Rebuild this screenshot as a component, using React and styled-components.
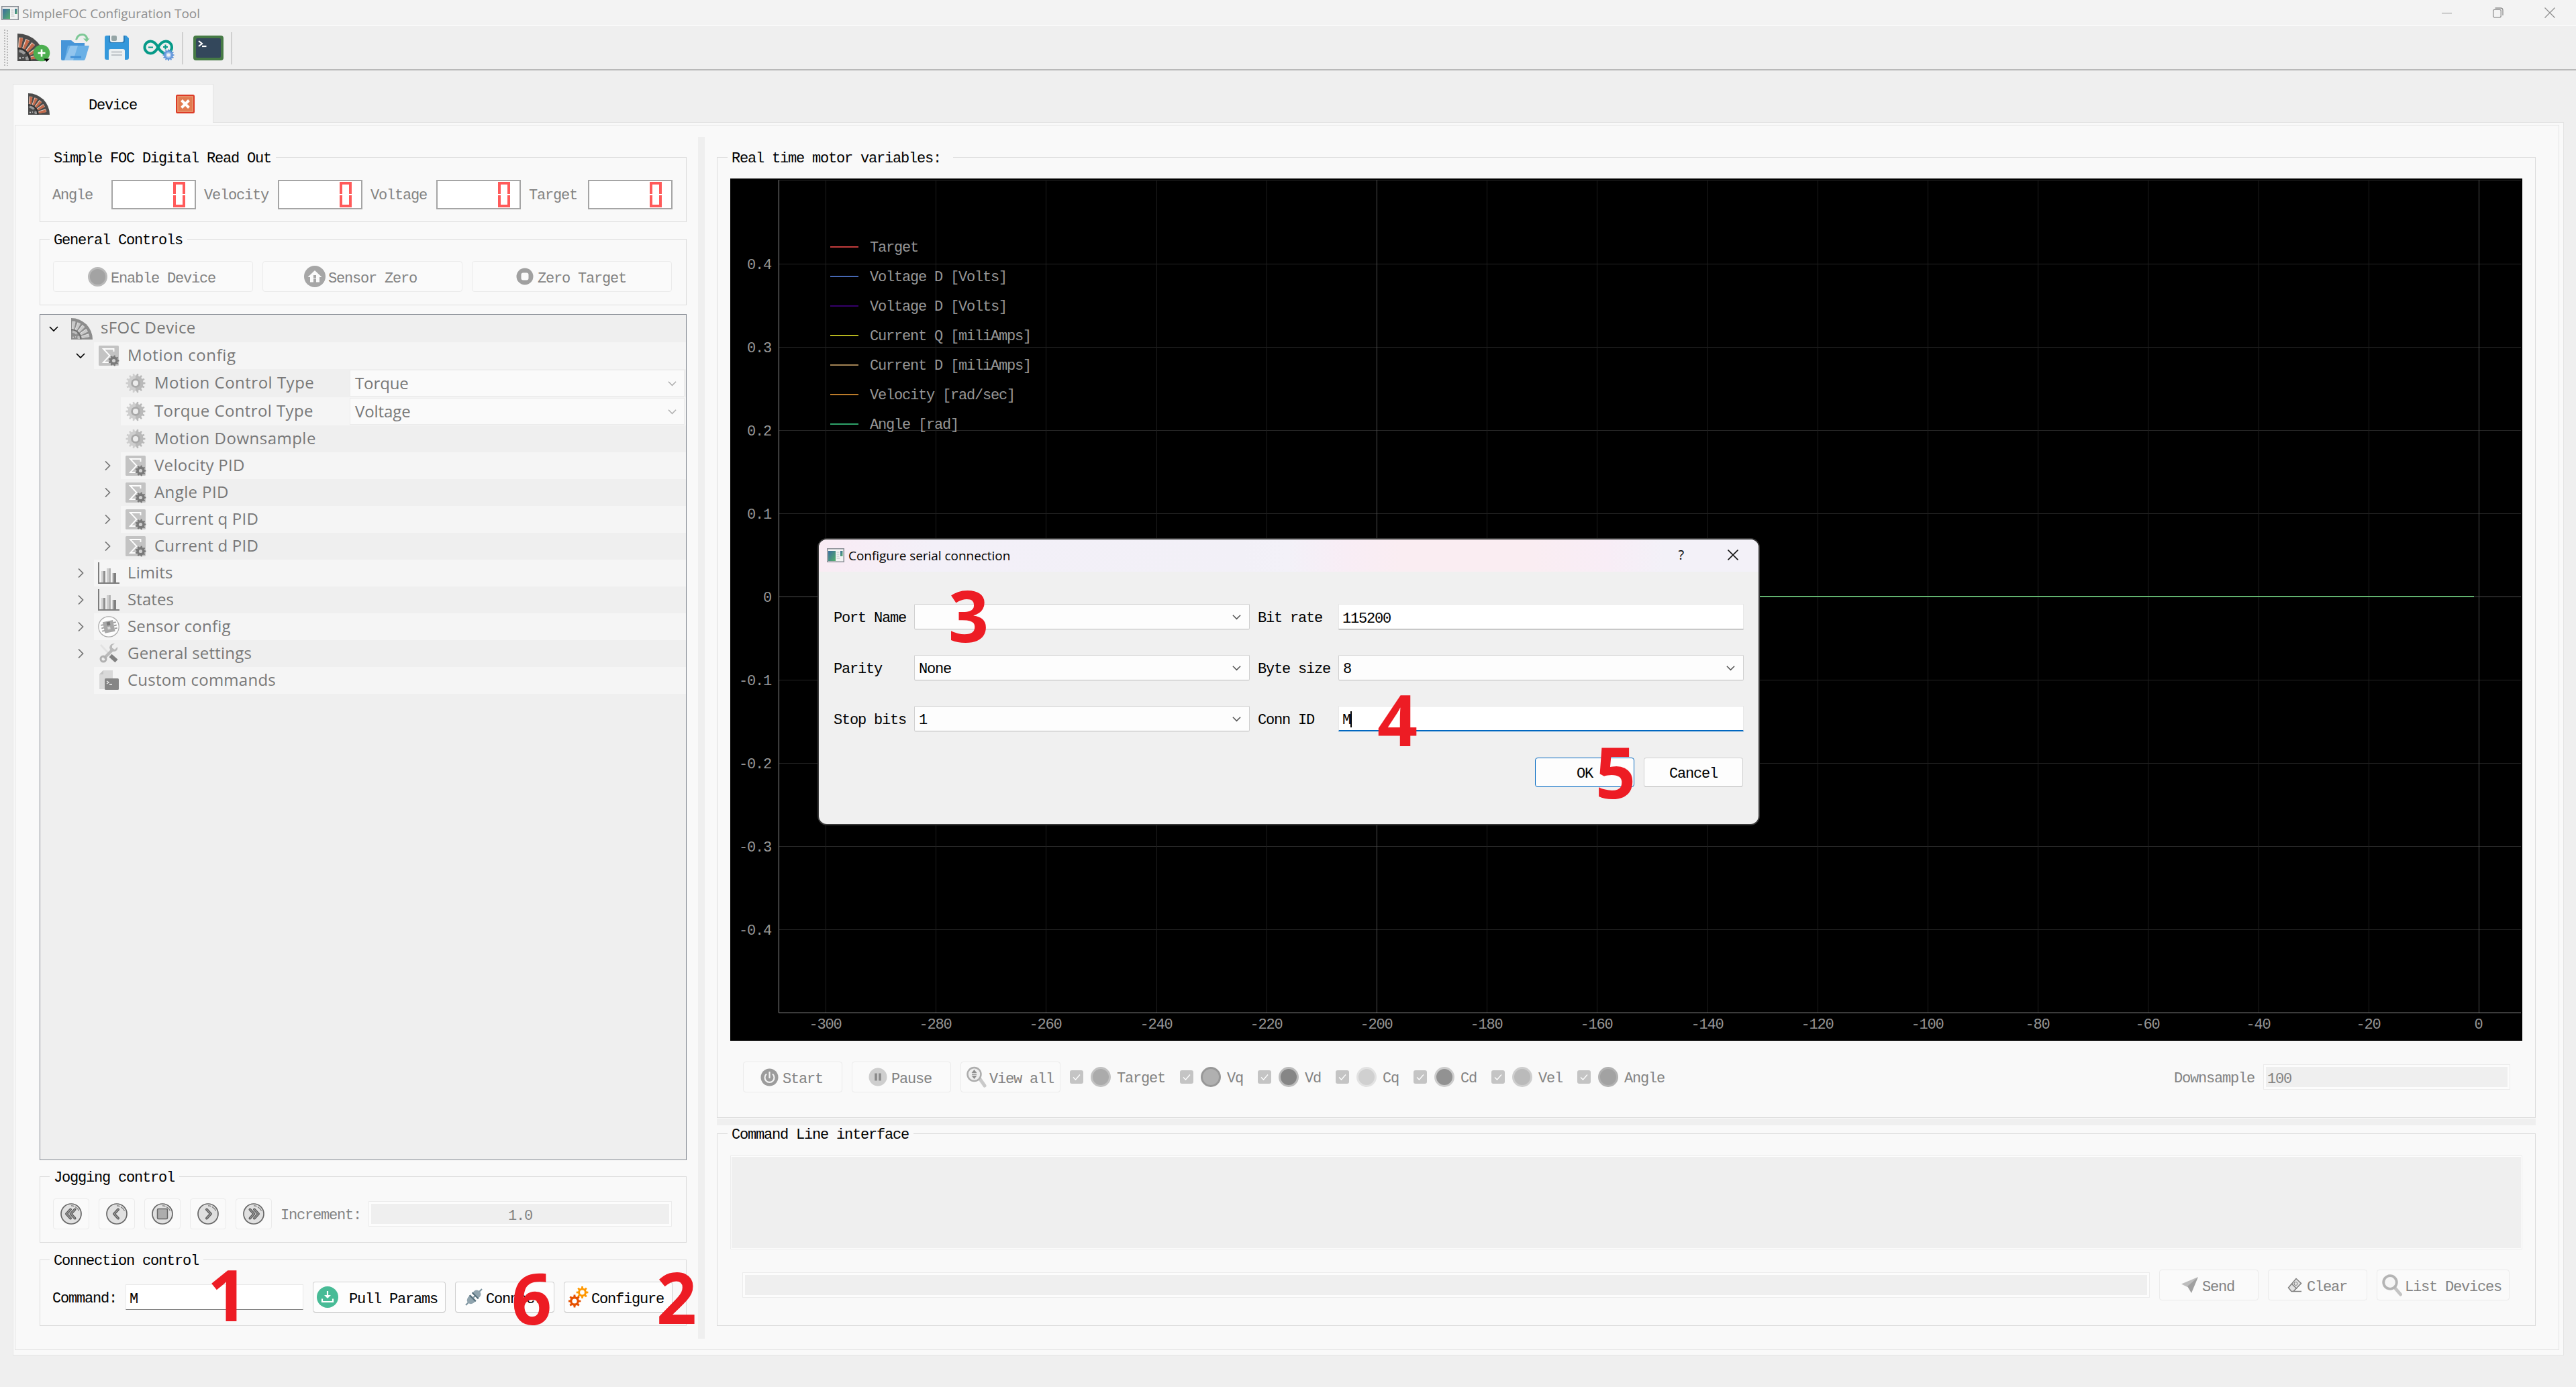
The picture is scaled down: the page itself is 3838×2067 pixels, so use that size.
import React from "react";
import styled, { createGlobalStyle, css } from "styled-components";

const mono = `"Liberation Mono", "Noto Sans CJK SC", monospace`;
const sans = `"Open Sans", "Noto Sans", sans-serif`;

const GlobalStyle = createGlobalStyle`
  *, *::before, *::after { box-sizing: border-box; }
  html, body { margin: 0; padding: 0; background: #efefef; }
  svg { display: block; flex: none; }
`;

/* ---------- window frame ---------- */

const Window = styled.div`
  position: relative;
  display: flex;
  flex-direction: column;
  width: 3838px;
  height: 2067px;
  overflow: hidden;
  background: #efefef;
  font-family: ${mono};
  font-size: 22px;
  letter-spacing: -1.2px;
  line-height: 26px;
  color: #000;
`;

const TitleBar = styled.header`
  display: flex;
  align-items: center;
  height: 39px;
  padding: 0 31px 0 2px;
  background: #f3f3f3;
  border-bottom: 1px solid #fff;
`;

const WindowTitle = styled.h1`
  flex: 1;
  margin: 2px 0 0 5px;
  font: 400 19px/26px ${sans};
  letter-spacing: -0.02px;
  color: #8f8f8f;
`;

const WindowButtons = styled.div`
  display: flex;
  align-items: center;
  gap: 61px;
`;

const ToolBar = styled.nav`
  display: flex;
  align-items: center;
  height: 66px;
  padding-left: 5px;
  border-bottom: 2px solid #b9b9b9;
`;

const ToolButton = styled.span`
  display: flex;
  width: 48px;
  height: 42px;
  margin-left: ${(p) => p.$gap}px;
`;

const Separator = styled.i`
  width: 2px;
  height: 48px;
  margin: 2px 0 0 ${(p) => p.$gap}px;
  background: #d0d0d0;
`;

const Tab = styled.div`
  position: relative;
  z-index: 1;
  display: flex;
  align-items: center;
  width: 299px;
  height: 58px;
  margin: 20px 0 -1px 19px;
  padding: 0 27px 0 22px;
  background: #f9f9f9;
  border: 1px solid #e3e3e3;
  border-bottom: 0;
`;

const TabLabel = styled.span`
  flex: 1;
  padding: 6px 0 0 58px;
`;

const Pane = styled.main`
  display: flex;
  width: 3801px;
  height: 1838px;
  margin-left: 19px;
  padding: 3px 7px 7px 2px;
  background: #f9f9f9;
  border: 1px solid #e3e3e3;
`;

const Page = styled.div`
  display: flex;
  flex: 1;
  padding: 17px 34px 16px 36px;
  border: 1px solid #e3e3e3;
`;

const Column = styled.section`
  display: flex;
  flex-direction: column;
  padding-top: 30px;
  width: ${(p) => p.$width}px;
`;

const VerticalSplitter = styled.i`
  width: 10px;
  margin: 0 18px 0 17px;
  background: #efefef;
`;

const HorizontalSplitter = styled.i`
  height: 10px;
  margin-top: 1px;
  background: #efefef;
`;

/* ---------- shared controls ---------- */

const Group = styled.section`
  display: flex;
  flex-direction: column;
  height: ${(p) => p.$height}px;
  margin-top: ${(p) => p.$gap || 0}px;
  border: 1px solid #dcdcdc;
`;

const GroupTitle = styled.h2`
  align-self: flex-start;
  height: 26px;
  margin: -11px 0 0 ${(p) => p.$left ?? 14}px;
  padding: 0 ${(p) => p.$after ?? 7}px 0 6px;
  font: inherit;
  background: #f9f9f9;
`;

const Row = styled.div`
  display: flex;
  align-items: center;
  margin: ${(p) => p.$margin || "0"};
`;

const Caption = styled.span`
  width: ${(p) => p.$width}px;
  padding-top: ${(p) => p.$drop ?? 6}px;
  white-space: pre;
  color: ${(p) => (p.$active ? "#000" : "#838383")};
`;

const Button = styled.button`
  display: flex;
  align-items: center;
  justify-content: ${(p) => (p.$pad === undefined ? "center" : "flex-start")};
  width: ${(p) => p.$width}px;
  height: ${(p) => p.$height || 46}px;
  margin: 0 0 0 ${(p) => p.$gap || 0}px;
  padding: 0 0 0 ${(p) => p.$pad || 0}px;
  font: inherit;
  letter-spacing: inherit;
  white-space: pre;
  color: #838383;
  background: #fafafa;
  border: 1px solid #ebebeb;
  border-radius: 4px;
  ${(p) =>
    p.$active &&
    css`
      color: #000;
      background: #fdfdfd;
      border-color: #d0d0d0;
      border-bottom-color: #b8b8b8;
    `}
  ${(p) =>
    p.$primary &&
    css`
      border-color: #0067c0;
    `}
`;

const ButtonText = styled.span`
  padding: ${(p) => p.$drop ?? 7}px 0 0 ${(p) => p.$left || 0}px;
`;

const Field = styled.div`
  display: flex;
  align-items: center;
  width: ${(p) => p.$width}px;
  height: 38px;
  margin-left: ${(p) => p.$gap || 0}px;
  padding: 7px 0 0 ${(p) => p.$pad ?? 5}px;
  background: #fff;
  border: 1px solid #e8e8e8;
  border-bottom-color: #868686;
  ${(p) =>
    p.$focused &&
    css`
      border-bottom: 2px solid #0067c0;
    `}
`;

const DisabledField = styled.div`
  display: flex;
  width: ${(p) => p.$width}px;
  height: ${(p) => p.$height || 38}px;
  margin: ${(p) => p.$margin || "0"};
  padding: ${(p) => p.$inset || "3px"};
  background: #fcfcfc;
  border: 1px solid #ececec;
`;

const DisabledFill = styled.div`
  flex: 1;
  padding: 6px 0 0 ${(p) => p.$pad || 0}px;
  line-height: 26px;
  text-align: ${(p) => p.$align || "left"};
  color: #838383;
  background: #efefef;
`;

const Select = styled.div`
  display: flex;
  align-items: center;
  justify-content: space-between;
  width: ${(p) => p.$width}px;
  height: 38px;
  padding: 0 12px 0 6px;
  background: #fdfdfd;
  border: 1px solid #d0d0d0;
  border-bottom-color: #b8b8b8;
  border-radius: 2px;
`;

const Caret = styled.i`
  width: 2px;
  height: 24px;
  margin-top: -4px;
  background: #000;
`;

/* ---------- read out ---------- */

const Lcd = styled.div`
  display: flex;
  justify-content: flex-end;
  width: 126px;
  height: 44px;
  margin-right: 12px;
  padding: 1px 14px 0 0;
  background: #fff;
  border: 2px solid #a5a5a5;
`;

/* ---------- tree ---------- */

const Tree = styled.div`
  height: 1261px;
  margin-top: 13px;
  background: #efefef;
  border: 1px solid #828790;
`;

const TreeRow = styled.div`
  display: flex;
  height: ${(p) => p.$height}px;
  padding-left: ${(p) => p.$level * 40}px;
`;

const Branch = styled.span`
  display: flex;
  align-items: center;
  justify-content: center;
  width: 40px;
`;

const TreeCell = styled.span`
  display: flex;
  flex: 1;
  align-items: center;
  padding-left: 6px;
  background: ${(p) => (p.$alt ? "#f5f5f5" : "#efefef")};
`;

const TreeText = styled.span`
  flex: 1;
  padding: 0 0 3px 12px;
  font: 400 24px/32px ${sans};
  letter-spacing: ${(p) => p.$tracking}px;
  color: #787878;
`;

const TreeSelect = styled.span`
  display: flex;
  align-items: center;
  justify-content: space-between;
  width: 499px;
  height: 40px;
  margin-right: 2px;
  padding: 0 11px 0 7px;
  font: 400 24px/32px ${sans};
  letter-spacing: -0.1px;
  color: #787878;
  background: #fafafa;
  border: 1px solid #ebebeb;
`;

/* ---------- plot tools ---------- */

const SeriesToggle = styled.label`
  display: flex;
  align-items: center;
  margin-right: 22px;
`;

const Check = styled.span`
  display: flex;
  width: 20px;
  height: 20px;
  margin-right: 11px;
  background: #c4c4c4;
  border-radius: 3px;
`;

const SeriesText = styled.span`
  padding: 6px 0 0 9px;
  color: #838383;
`;

/* ---------- dialog ---------- */

const Dialog = styled.div`
  position: absolute;
  left: 1220px;
  top: 804px;
  width: 1400px;
  height: 424px;
  background: #f0f0f0;
  border-radius: 12px;
  box-shadow: 0 0 0 2px #383838;
  overflow: hidden;
`;

const DialogBar = styled.div`
  display: flex;
  align-items: center;
  height: 48px;
  padding: 0 30px 2px 12px;
  background: linear-gradient(90deg, #f9ecf3 0%, #f8ecf5 2%, #f3f0f8 12%, #f2f0f7 45%, #f3f1f8 50%, #f8edf5 56%, #faedf2 62%, #faedf2 76%, #f8edf6 84%, #f3f1f8 90%, #f3f1f8 100%);
`;

const DialogTitle = styled.h2`
  flex: 1;
  margin: 2px 0 0 6px;
  font: 400 19px/26px ${sans};
  letter-spacing: -0.04px;
`;

const HelpMark = styled.span`
  margin: 0 66px 0 0;
  font: 400 20px/26px ${sans};
`;

const Form = styled.div`
  display: grid;
  grid-template-columns: 120px 512px 120px 604px;
  grid-auto-rows: 38px;
  row-gap: 38px;
  padding: 48px 0 0 22px;
`;

const DialogActions = styled.div`
  display: flex;
  justify-content: flex-end;
  gap: 14px;
  padding: 39px 23px 0 0;
`;

const StepNumber = styled.strong`
  position: absolute;
  left: ${(p) => p.$x}px;
  top: ${(p) => p.$y}px;
  width: 60px;
  font: 700 105px/76px ${sans};
  letter-spacing: 0;
  text-align: center;
  color: #ed1c24;
`;

/* ---------- icons ---------- */

const AppIcon = () => (
  <svg width="26" height="21" viewBox="0 0 26 21">
    <rect x=".75" y=".75" width="24.5" height="19.5" fill="#f4f4f4" stroke="#8a8f96" strokeWidth="1.5" />
    <defs>
      <linearGradient id="app" x1="0" y1="0" x2="1" y2="1">
        <stop offset="0" stopColor="#3b6b9e" />
        <stop offset="1" stopColor="#55b06c" />
      </linearGradient>
    </defs>
    <rect x="2" y="4" width="11" height="15" fill="url(#app)" />
    <path d="M14.5 6h4M14.5 9h4M14.5 12h4M14.5 15h5" stroke="#b9bcc0" />
    <rect x="20" y="4" width="3.5" height="8" fill="url(#app)" />
  </svg>
);

const MotorShape = ({ gray }) => {
  const coil = gray ? "#c8c8c8" : "#c4694a";
  const light = gray ? "#e0e0e0" : "#e9d2c5";
  return (
    <g>
      <path d="M0 0A32 32 0 0 1 32 32H0Z" fill={gray ? "#8c8c8c" : "#4b4b4b"} />
      <g transform="translate(0 32)">
        {[8, 25, 42, 59, 76].map((a) => (
          <g key={a} transform={`rotate(${a})`}>
            <path d="M-2.2 -27.5L2.6 -27.5L1.8 -16L-1.4 -16Z" fill={light} />
            <path d="M-1.2 -27L2.8 -27L2 -16L-.4 -16Z" fill={coil} />
          </g>
        ))}
        <path d="M0 -14.5A14.5 14.5 0 0 1 14.5 0" fill="none" stroke={gray ? "#6f6f6f" : "#2f2f2f"} strokeWidth="2" />
        <path d="M2 -12A12 12 0 0 1 8.5 -8.5M10.5 -5A12 12 0 0 1 11.5 -1" stroke={gray ? "#bdbdbd" : "#9a9a9a"} strokeWidth="3.4" fill="none" />
        <circle cx="3" cy="-3.5" r="1" fill="#ddd" />
        <circle cx="6.5" cy="-4" r=".8" fill="#ddd" />
      </g>
    </g>
  );
};

const MotorIcon = ({ gray, size = 32 }) => (
  <svg width={size} height={size} viewBox="0 0 32 32"><MotorShape gray={gray} /></svg>
);

const Grip = () => (
  <svg width="8" height="54">
    {Array.from({ length: 14 }, (_, i) => (
      <g key={i} fill="#b8b8b8">
        <rect x="1" y={i * 4} width="2" height="2" />
        <rect x="5" y={i * 4 + 1} width="2" height="2" />
      </g>
    ))}
  </svg>
);

const AddMotorIcon = () => (
  <svg width="50" height="42" viewBox="0 0 50 42">
    <g transform="scale(1.28)"><MotorShape /></g>
    <circle cx="36" cy="29" r="12.3" fill="#4caf50" />
    <path d="M36 23.5v11M30.5 29h11" stroke="#fff" strokeWidth="2.6" />
    <path d="M39 37.5h9l-4.5 4.5z" fill="#000" />
  </svg>
);

const OpenIcon = () => (
  <svg width="44" height="42" viewBox="0 0 44 42">
    <path d="M0 10h15l5 4h15v8L28 40H2q-2 0-2-2z" fill="#4795d8" />
    <path d="M10 18h32l-6 20q-.5 2-2.5 2H5z" fill="#6ab0e6" />
    <path d="M14 18h11l-7 22H5z" fill="#92c5ee" />
    <path d="M14 35h16" stroke="#4290d6" strokeWidth="3" />
    <path d="M22.5 9.500q2-8 9-8 6 0 7.500 7" fill="none" stroke="#7ec896" strokeWidth="3" />
    <path d="M33 7.500h9.500l-4.500 5z" fill="#7ec896" />
  </svg>
);

const SaveIcon = () => (
  <svg width="36" height="36" viewBox="0 0 36 36">
    <path d="M3 0h29l4 4v29q0 3-3 3H3q-3 0-3-3V3q0-3 3-3z" fill="#3498db" />
    <path d="M6 0h24v8q0 3-3 3H9q-3 0-3-3z" fill="#2a7cb8" />
    <path d="M8 0h20v7q0 3-3 3H11q-3 0-3-3z" fill="#ecf0f1" />
    <rect x="10" y="0" width="8" height="8" rx="2" fill="#95a5a6" />
    <path d="M6 36V23q0-3 3-3h18q3 0 3 3v13z" fill="#ecf0f1" />
    <path d="M10 24.5h16M10 29h16" stroke="#bdc3c7" strokeWidth="2" />
  </svg>
);

const ArduinoIcon = () => (
  <svg width="48" height="34" viewBox="0 0 48 34">
    <path d="M22.5 11.5C19 5 15.5 2.5 11.5 2.5a9 9 0 0 0 0 18c4 0 7.5-2.500 11-9S30 2.5 34 2.5a9 9 0 0 1 0 18c-4 0-8-2.500-11.5-9z" fill="none" stroke="#069a88" strokeWidth="4" />
    <path d="M8 11.5h7M30 11h7M33.5 7.5v7" stroke="#069a88" strokeWidth="2.2" />
    <path d={gearPath(38, 23, 8.6, 12, 1.8)} fill="#5d92d8" />
    <circle cx="38" cy="23" r="5" fill="#a9c6ef" stroke="#6d9ddd" strokeWidth="2" />
    <circle cx="38" cy="23" r="2.4" fill="#efefef" />
  </svg>
);

const TerminalIcon = () => (
  <svg width="45" height="37" viewBox="0 0 45 37">
    <rect width="45" height="37" rx="4" fill="#467a45" />
    <rect x="4" y="4" width="37" height="29" rx="2" fill="#33475b" />
    <path d="M8 8l5 4-5 4" fill="none" stroke="#fff" strokeWidth="2.2" />
    <path d="M13 16h6.5" stroke="#fff" strokeWidth="2.2" />
  </svg>
);

const CloseTabIcon = () => (
  <svg width="28" height="28" viewBox="0 0 28 28">
    <rect x="1" y="1" width="26" height="26" rx="1.5" fill="#e27b50" stroke="#dc3a26" strokeWidth="2" />
    <rect x="3" y="3" width="22" height="22" fill="none" stroke="#e9956f" strokeWidth="1.5" />
    <path d="M8.5 8.5l11 11M19.5 8.5l-11 11" stroke="#fff" strokeWidth="4" />
  </svg>
);

const Chevron = ({ down, color = "#000", size = 14 }) => (
  <svg width={size} height={size} viewBox="0 0 14 14">
    <path d={down ? "M1 4l6 6 6-6" : "M4 0.5l6.5 6.5-6.5 6.5"} fill="none" stroke={color} strokeWidth="1.7" />
  </svg>
);

function gearPath(cx, cy, r, teeth, depth) {
  const pts = [];
  for (let i = 0; i < teeth; i++) {
    [[-0.3, r - depth], [-0.18, r], [0.18, r], [0.3, r - depth]].forEach(([o, rad]) => {
      const a = ((i + o) / teeth) * Math.PI * 2;
      pts.push(`${(cx + Math.cos(a) * rad).toFixed(2)} ${(cy + Math.sin(a) * rad).toFixed(2)}`);
    });
  }
  return `M${pts.join("L")}Z`;
}

const GearIcon = () => (
  <svg width="32" height="32" viewBox="0 0 32 32">
    <defs>
      <linearGradient id="gear">
        <stop offset=".5" stopColor="#cecece" />
        <stop offset=".5" stopColor="#b9b9b9" />
      </linearGradient>
    </defs>
    <path d={gearPath(16, 16, 14.5, 14, 3)} fill="url(#gear)" />
    <circle cx="16" cy="16" r="6.800" fill="#a8a8a8" />
    <circle cx="16" cy="16" r="4" fill="#ececec" />
  </svg>
);

const SigmaIcon = () => (
  <svg width="32" height="32" viewBox="0 0 32 32">
    <rect x="1" y="1" width="30" height="30" rx="1.500" fill="#c3c3c3" />
    <path d="M23.500 10V6H8l9.500 10L8 26h11" fill="none" stroke="#fdfdfd" strokeWidth="1.900" />
    <path d={gearPath(23.500, 23.500, 8, 9, 1.800)} fill="#7a7a7a" />
    <circle cx="23.500" cy="23.500" r="2.600" fill="#d0d0d0" />
  </svg>
);

const ChartIcon = () => (
  <svg width="32" height="32" viewBox="0 0 32 32">
    <path d="M1 0v31h31" fill="none" stroke="#7d7d7d" strokeWidth="2" />
    <path d="M5 13h3v17h-3zM13 9h3v21h-3zM21 16h3v14h-3z" fill="#cfcfcf" />
    <path d="M8 13h3v17h-3z" fill="#8f8f8f" />
    <path d="M16 9h3v21h-3z" fill="#b4b4b4" />
    <path d="M23 16h4v14h-4z" fill="#808080" />
  </svg>
);

const SensorIcon = () => (
  <svg width="32" height="32" viewBox="0 0 32 32">
    <circle cx="16" cy="16" r="15.2" fill="#fdfdfd" stroke="#a9a9a9" strokeWidth="1.200" />
    <g transform="rotate(-12 16 16)">
      <path d="M5 11.500h4M5 16h4M5 20.500h4M24 11.500h4M24 16h4M24 20.500h4" stroke="#9a9a9a" strokeWidth="1.800" />
      <rect x="8.500" y="7.500" width="15.500" height="17" fill="#a8a8a8" />
      <rect x="14" y="9" width="5" height="5" fill="#7a7a7a" />
      <rect x="14" y="16" width="4" height="4" fill="#d8d8d8" />
    </g>
  </svg>
);

const ToolsIcon = () => (
  <svg width="32" height="32" viewBox="0 0 32 32">
    <path d="M4 3l14 15" stroke="#e2e2e2" strokeWidth="2.600" />
    <path d="M18.500 19l9 8" stroke="#808080" strokeWidth="6" />
    <path d="M9 23L23 9" stroke="#bababa" strokeWidth="4.500" />
    <circle cx="8" cy="24" r="4" fill="none" stroke="#b0b0b0" strokeWidth="3" />
    <path d="M29 6l-4 4-4-2 0-4 4-3q-7-.5-8 6 1 6 7 6 6-1 5-7z" fill="#bababa" />
  </svg>
);

const CommandsIcon = () => (
  <svg width="32" height="32" viewBox="0 0 32 32">
    <path d="M8 1h14v28H2V7z" fill="#d9d9d9" />
    <path d="M8 1v6H2z" fill="#c4c4c4" />
    <rect x="10" y="13" width="21" height="17" rx="1.5" fill="#858585" />
    <path d="M13 17l3 2-3 2M17 22h4" fill="none" stroke="#f2f2f2" strokeWidth="1.3" />
  </svg>
);

const Disc = ({ size = 30, fill = "#a3a3a3", ring = "#b9b9b9", width = 3 }) => (
  <svg width={size} height={size} viewBox="0 0 30 30">
    <circle cx="15" cy="15" r={15 - width / 2} fill={fill} stroke={ring} strokeWidth={width} />
  </svg>
);

const HomeIcon = () => (
  <svg width="32" height="32" viewBox="0 0 32 32">
    <circle cx="16" cy="16" r="16" fill="#a6a6a6" />
    <path d="M16 7L5.5 17h3.5v7.500h5V19h4v5.500h5V17h3.500z" fill="#fafafa" />
    <rect x="14" y="14" width="4" height="4" fill="#a6a6a6" />
  </svg>
);

const RingIcon = () => (
  <svg width="26" height="26" viewBox="0 0 26 26">
    <circle cx="13" cy="13" r="12.5" fill="#a0a0a0" />
    <rect x="7.5" y="7.5" width="11" height="11" rx="3" fill="#fafafa" />
  </svg>
);

const jogArrows = {
  first: ["M15 9.5L9 16l6 6.5", "M21.5 9.5L15.5 16l6 6.5"],
  prev: ["M18 9.5L12 16l6 6.5"],
  next: ["M14 9.5l6 6.5-6 6.5"],
  last: ["M10.5 9.5l6 6.5-6 6.5", "M17 9.5l6 6.5-6 6.5"],
};

const JogIcon = ({ kind }) => (
  <svg width="32" height="32" viewBox="0 0 32 32">
    <circle cx="16" cy="16" r="15" fill="#e0e0e0" stroke="#666" strokeWidth="1.7" />
    <path d="M16 3.8q3 0 4.5.8M22 5.5q4 2.5 5.5 6" fill="none" stroke="#777" strokeWidth="1.3" />
    {kind === "stop" && <rect x="8.5" y="8.5" width="15" height="15" rx="1.5" fill="#adadad" stroke="#666" strokeWidth="1.5" />}
    {(jogArrows[kind] || []).map((d) => (
      <g key={d} fill="none" strokeLinecap="round" strokeLinejoin="round">
        <path d={d} stroke="#5c5c5c" strokeWidth="4" />
        <path d={d} stroke="#9a9a9a" strokeWidth="1.2" />
      </g>
    ))}
  </svg>
);

const PullIcon = () => (
  <svg width="32" height="32" viewBox="0 0 32 32">
    <circle cx="16" cy="16" r="16" fill="#48bb96" />
    <path d="M16 7v8M8 18.5v4.5h16v-4.5" fill="none" stroke="#fff" strokeWidth="2.2" />
    <path d="M11 13h10l-5 5z" fill="#fff" />
  </svg>
);

const PlugIcon = () => (
  <svg width="26" height="26" viewBox="0 0 26 26">
    <g transform="rotate(-45 13 13)">
      <path d="M-4 13h34" stroke="#78909c" strokeWidth="2" />
      <path d="M12 7v12H7q-6-1-6-6t6-6zM15.5 7v12H20q5-1 5-6t-5-6z" fill="#90a4ae" />
      <path d="M10.5 6.500v13M16 6.500v13" stroke="#546e7a" strokeWidth="2" />
    </g>
  </svg>
);

const ConfigureIcon = () => (
  <svg width="30" height="32" viewBox="0 0 30 32">
    <path d={gearPath(20.5, 9, 9, 8, 2.6)} fill="#ff9800" />
    <circle cx="20.5" cy="9" r="3.4" fill="#fdfdfd" />
    <path d={gearPath(9, 22, 9.5, 8, 2.6)} fill="#e65100" />
    <circle cx="9" cy="22" r="3.6" fill="#fdfdfd" />
  </svg>
);

const PowerIcon = () => (
  <svg width="27" height="27" viewBox="0 0 27 27">
    <circle cx="13.5" cy="13.5" r="13" fill="#9c9c9c" />
    <path d="M9 8.5a7 7 0 1 0 9 0" fill="none" stroke="#f2f2f2" strokeWidth="2.2" />
    <path d="M13.5 5v10" stroke="#f2f2f2" strokeWidth="2.2" />
  </svg>
);

const PauseIcon = () => (
  <svg width="28" height="28" viewBox="0 0 28 28">
    <circle cx="14" cy="14" r="13.5" fill="#cecece" />
    <path d="M11 8.5v11M17 8.5v11" stroke="#8a8a8a" strokeWidth="3.6" />
  </svg>
);

const ZoomAllIcon = () => (
  <svg width="30" height="32" viewBox="0 0 30 32">
    <path d="M20 19l7 10" stroke="#c9c9c9" strokeWidth="5" strokeLinecap="round" />
    <circle cx="11.5" cy="12" r="10" fill="#eee" stroke="#adadad" strokeWidth="2.5" />
    <path d="M11.5 5l4 5h-8zM11.5 19l4-5h-8z" fill="#8e8e8e" />
    <path d="M8 12h7" stroke="#8e8e8e" strokeWidth="1.5" />
  </svg>
);

const SendIcon = () => (
  <svg width="26" height="26" viewBox="0 0 26 26">
    <path d="M25 1L0 11.5 9 16z" fill="#bdbdbd" />
    <path d="M25 1L15 25 9 15z" fill="#a0a0a0" />
  </svg>
);

const EraserIcon = () => (
  <svg width="22" height="22" viewBox="0 0 22 22">
    <path d="M13 1.5l7.5 7L9 20.5H6L1.5 15z" fill="#e2e2e2" stroke="#7e7e7e" strokeWidth="1.5" />
    <path d="M6 9l8 7.5M9 20.5h12" stroke="#7e7e7e" strokeWidth="1.5" />
    <circle cx="12.5" cy="9" r="2.5" fill="none" stroke="#7e7e7e" />
  </svg>
);

const SearchIcon = () => (
  <svg width="31" height="33" viewBox="0 0 31 33">
    <path d="M19 20l8.5 10" stroke="#c4c4c4" strokeWidth="5" strokeLinecap="round" />
    <circle cx="12" cy="12" r="9.8" fill="#f6f6f6" stroke="#b4b4b4" strokeWidth="3.8" />
  </svg>
);

const ZeroDigit = () => (
  <svg width="18" height="38" viewBox="0 0 18 38">
    <path d="M2 18V2h14v16M2 20v16h14V20" fill="none" stroke="#ff5a5a" strokeWidth="4" />
  </svg>
);

const MinimizeIcon = () => (
  <svg width="15" height="15"><path d="M0 7.5h15" stroke="#8f8f8f" /></svg>
);

const RestoreIcon = () => (
  <svg width="16" height="16" viewBox="0 0 16 16" fill="none" stroke="#8f8f8f" strokeWidth="1.3">
    <rect x=".7" y="3.3" width="11.5" height="11.5" rx="2" />
    <path d="M3.5 1h8q3.5 0 3.5 3.5v7.5" />
  </svg>
);

const CloseIcon = ({ color, width = 1.3 }) => (
  <svg width="16" height="16" viewBox="0 0 16 16">
    <path d="M.5.5l15 15M15.5.5l-15 15" stroke={color} strokeWidth={width} />
  </svg>
);

/* ---------- data ---------- */

const readouts = [
  { label: "Angle", width: 88 },
  { label: "Velocity", width: 110 },
  { label: "Voltage", width: 98 },
  { label: "Target", width: 88 },
];

const treeRows = [
  { text: "sFOC Device", level: 0, open: true, icon: <MotorIcon gray />, height: 41, tracking: 0.35 },
  { text: "Motion config", level: 1, open: true, icon: <SigmaIcon />, tracking: 0.6 },
  { text: "Motion Control Type", level: 2, icon: <GearIcon />, value: "Torque", height: 42, tracking: 0.5 },
  { text: "Torque Control Type", level: 2, icon: <GearIcon />, value: "Voltage", height: 42, tracking: 0.4 },
  { text: "Motion Downsample", level: 2, icon: <GearIcon />, tracking: 0.5 },
  { text: "Velocity PID", level: 2, open: false, icon: <SigmaIcon />, tracking: 0.3 },
  { text: "Angle PID", level: 2, open: false, icon: <SigmaIcon />, tracking: 0.4 },
  { text: "Current q PID", level: 2, open: false, icon: <SigmaIcon />, tracking: 0.25 },
  { text: "Current d PID", level: 2, open: false, icon: <SigmaIcon />, tracking: 0.25 },
  { text: "Limits", level: 1, open: false, icon: <ChartIcon />, tracking: 0.1 },
  { text: "States", level: 1, open: false, icon: <ChartIcon />, tracking: 0.1 },
  { text: "Sensor config", level: 1, open: false, icon: <SensorIcon />, tracking: 0.2 },
  { text: "General settings", level: 1, open: false, icon: <ToolsIcon />, tracking: 0.2 },
  { text: "Custom commands", level: 1, icon: <CommandsIcon />, tracking: 0.25 },
];

const legend = [
  ["Target", "#c23c3c"],
  ["Voltage D [Volts]", "#4668b4"],
  ["Voltage D [Volts]", "#35006a"],
  ["Current Q [miliAmps]", "#b5b51e"],
  ["Current D [miliAmps]", "#a38354"],
  ["Velocity [rad/sec]", "#bb7b2a"],
  ["Angle [rad]", "#2ea36a"],
];

const series = [
  ["Target", "#ababab", "#c2c2c2"],
  ["Vq", "#b0b0b0", "#989898"],
  ["Vd", "#868686", "#bcbcbc"],
  ["Cq", "#d0d0d0", "#e2e2e2"],
  ["Cd", "#929292", "#cccccc"],
  ["Vel", "#bababa", "#cecece"],
  ["Angle", "#a2a2a2", "#b2b2b2"],
];

/* ---------- plot ---------- */

const PlotSvg = styled.svg`
  margin: 16px 0 0 19px;
  background: #000;
  font-family: ${mono};
  font-size: 22px;
  letter-spacing: -1.2px;
`;

const Plot = () => {
  const x = (v) => Math.round(2605 + v * 8.21) + 0.5;
  const y = (v) => Math.round(622.5 - v * 1240) + 0.5;
  const xs = Array.from({ length: 16 }, (_, i) => -300 + i * 20);
  const ys = [0.4, 0.3, 0.2, 0.1, 0, -0.1, -0.2, -0.3, -0.4];
  return (
    <PlotSvg width="2670" height="1285" viewBox="0 0 2670 1285">
      <path d={ys.filter(Boolean).map((v) => `M72 ${y(v)}H2668`).join("") + "M72 2.5H2668"} stroke="#262626" />
      <path d={xs.filter((v) => v % 200).map((v) => `M${x(v)} 2V1243`).join("")} stroke="#1e1e1e" />
      <path d={`M72 ${y(0)}H2668M${x(-200)} 2V1243M${x(0)} 2V1243`} stroke="#505050" />
      <path d="M72.5 2V1243.5H2668" fill="none" stroke="#969696" />
      <path d={`M${x(-300)} 623H2598`} stroke="#62b26f" strokeWidth="2" />
      <g fill="#969696">
        {ys.map((v) => <text key={v} x="61" y={y(v) + 7.5} textAnchor="end">{v}</text>)}
        {xs.map((v) => <text key={v} x={x(v) - 1} y="1267" textAnchor="middle">{v}</text>)}
        {legend.map(([name], i) => <text key={i} x="208" y={109 + i * 44}>{name}</text>)}
      </g>
      {legend.map(([, color], i) => <path key={i} d={`M149 ${102 + i * 44}h42`} stroke={color} strokeWidth="2" />)}
    </PlotSvg>
  );
};

/* ---------- panels ---------- */

const TreePanel = () => (
  <Tree>
    {treeRows.map((r, i) => (
      <TreeRow key={r.text} $level={r.level} $height={r.height || 40}>
        <Branch>
          {r.open !== undefined && <Chevron down={r.open} color={r.open ? "#000" : "#757575"} />}
        </Branch>
        <TreeCell $alt={i % 2 === 1}>
          {r.icon}
          <TreeText $tracking={r.tracking}>{r.text}</TreeText>
          {r.value && (
            <TreeSelect>{r.value}<Chevron down color="#b0b0b0" size={13} /></TreeSelect>
          )}
        </TreeCell>
      </TreeRow>
    ))}
  </Tree>
);

const LeftPanel = () => (
  <Column $width={964}>
    <Group $height={97}>
      <GroupTitle>Simple FOC Digital Read Out</GroupTitle>
      <Row $margin="18px 0 0 18px">
        {readouts.map((r) => (
          <React.Fragment key={r.label}>
            <Caption $width={r.width} $drop={4}>{r.label}</Caption>
            <Lcd><ZeroDigit /></Lcd>
          </React.Fragment>
        ))}
      </Row>
    </Group>
    <Group $height={99} $gap={25}>
      <GroupTitle>General Controls</GroupTitle>
      <Row $margin="17px 0 0 19px">
        <Button $width={298} $pad={51}><Disc size={29} /><ButtonText $left={5}>Enable Device</ButtonText></Button>
        <Button $width={298} $pad={61} $gap={14}><HomeIcon /><ButtonText $left={4}>Sensor Zero</ButtonText></Button>
        <Button $width={298} $pad={65} $gap={14}><RingIcon /><ButtonText $left={6}>Zero Target</ButtonText></Button>
      </Row>
    </Group>
    <TreePanel />
    <Group $height={99} $gap={24}>
      <GroupTitle>Jogging control</GroupTitle>
      <Row $margin="17px 0 0 19px">
        {["first", "prev", "stop", "next", "last"].map((k, i) => (
          <Button key={k} $width={54} $gap={i ? 14 : 0}><JogIcon kind={k} /></Button>
        ))}
        <Row $margin="0 0 0 13px"><Caption $width={131}>Increment:</Caption></Row>
        <DisabledField $width={452}><DisabledFill $align="center">1.0</DisabledFill></DisabledField>
      </Row>
    </Group>
    <Group $height={99} $gap={25}>
      <GroupTitle>Connection control</GroupTitle>
      <Row $margin="17px 0 0 18px">
        <Caption $width={109} $active>Command:</Caption>
        <Field $width={265}>M</Field>
        <Button $active $width={198} $gap={14} $pad={5}><PullIcon /><ButtonText $left={16}>Pull Params</ButtonText></Button>
        <Button $active $width={148} $gap={14} $pad={14}><PlugIcon /><ButtonText $left={5}>Connect</ButtonText></Button>
        <Button $active $width={162} $gap={14} $pad={6}><ConfigureIcon /><ButtonText $left={4}>Configure</ButtonText></Button>
      </Row>
    </Group>
  </Column>
);

const RightPanel = () => (
  <Column $width={2710}>
    <Group $height={1432}>
      <GroupTitle $left={15} $after={18}>Real time motor variables:</GroupTitle>
      <Plot />
      <Row $margin="31px 0 0 38px">
        <Button $width={148} $pad={25}><PowerIcon /><ButtonText $left={6}>Start</ButtonText></Button>
        <Button $width={148} $gap={14} $pad={24}><PauseIcon /><ButtonText $left={6}>Pause</ButtonText></Button>
        <Button $width={149} $gap={14} $pad={8}><ZoomAllIcon /><ButtonText $left={4}>View all</ButtonText></Button>
        <Row $margin="0 auto 0 14px">
          {series.map(([name, fill, ring]) => (
            <SeriesToggle key={name}>
              <Check>
                <svg width="20" height="20"><path d="M5 10.5l3.5 3.5 6.5-7.5" fill="none" stroke="#fff" strokeWidth="1.3" /></svg>
              </Check>
              <Disc fill={fill} ring={ring} />
              <SeriesText>{name}</SeriesText>
            </SeriesToggle>
          ))}
        </Row>
        <Caption $width={133}>Downsample</Caption>
        <DisabledField $width={368} $margin="0 37px 0 0"><DisabledFill $pad={2}>100</DisabledFill></DisabledField>
      </Row>
    </Group>
    <HorizontalSplitter />
    <Group $height={287} $gap={12}>
      <GroupTitle $left={15}>Command Line interface</GroupTitle>
      <DisabledField $width={2670} $height={140} $margin="17px 0 0 19px" $inset="1px"><DisabledFill /></DisabledField>
      <Row $margin="30px 0 0 37px">
        <DisabledField $width={2097}><DisabledFill /></DisabledField>
        <Button $width={148} $gap={14} $pad={32}><SendIcon /><ButtonText $left={5}>Send</ButtonText></Button>
        <Button $width={148} $gap={14} $pad={28}><EraserIcon /><ButtonText $left={7}>Clear</ButtonText></Button>
        <Button $width={198} $gap={14} $pad={7}><SearchIcon /><ButtonText $left={3}>List Devices</ButtonText></Button>
      </Row>
    </Group>
  </Column>
);

const FormSelect = ({ value, width }) => (
  <Select $width={width}>
    <Caption $active $drop={6}>{value}</Caption>
    <Chevron down color="#555" size={13} />
  </Select>
);

const SerialDialog = () => (
  <Dialog>
    <DialogBar>
      <AppIcon />
      <DialogTitle>Configure serial connection</DialogTitle>
      <HelpMark>?</HelpMark>
      <CloseIcon color="#111" width={1.6} />
    </DialogBar>
    <Form>
      <Caption $active $drop={9}>Port Name</Caption>
      <FormSelect width={500} value="" />
      <Caption $active $drop={9}>Bit rate</Caption>
      <Field $width={604}>115200</Field>
      <Caption $active $drop={9}>Parity</Caption>
      <FormSelect width={500} value="None" />
      <Caption $active $drop={9}>Byte size</Caption>
      <FormSelect width={604} value="8" />
      <Caption $active $drop={9}>Stop bits</Caption>
      <FormSelect width={500} value="1" />
      <Caption $active $drop={9}>Conn ID</Caption>
      <Field $width={604} $focused>M<Caret /></Field>
    </Form>
    <DialogActions>
      <Button $active $primary $width={148} $height={44}><ButtonText $drop={5}>OK</ButtonText></Button>
      <Button $active $width={148} $height={44}><ButtonText $drop={5}>Cancel</ButtonText></Button>
    </DialogActions>
  </Dialog>
);

const steps = [
  [1, 309, 1891],
  [2, 978, 1895],
  [3, 1413, 879],
  [4, 2052, 1034],
  [5, 2377, 1112],
  [6, 762, 1896],
];

export default function App() {
  return (
    <Window>
      <GlobalStyle />
      <TitleBar>
        <AppIcon />
        <WindowTitle>SimpleFOC Configuration Tool</WindowTitle>
        <WindowButtons>
          <MinimizeIcon />
          <RestoreIcon />
          <CloseIcon color="#8f8f8f" />
        </WindowButtons>
      </TitleBar>
      <ToolBar>
        <Grip />
        <ToolButton $gap={13}><AddMotorIcon /></ToolButton>
        <ToolButton $gap={17}><OpenIcon /></ToolButton>
        <Row $margin="0 0 0 17px"><SaveIcon /></Row>
        <Row $margin="9px 0 0 21px"><ArduinoIcon /></Row>
        <Separator $gap={10} />
        <Row $margin="1px 0 0 15px"><TerminalIcon /></Row>
        <Separator $gap={11} />
      </ToolBar>
      <Tab>
        <MotorIcon />
        <TabLabel>Device</TabLabel>
        <CloseTabIcon />
      </Tab>
      <Pane>
        <Page>
          <LeftPanel />
          <VerticalSplitter />
          <RightPanel />
        </Page>
      </Pane>
      <SerialDialog />
      {steps.map(([n, x, y]) => <StepNumber key={n} $x={x} $y={y}>{n}</StepNumber>)}
    </Window>
  );
}
